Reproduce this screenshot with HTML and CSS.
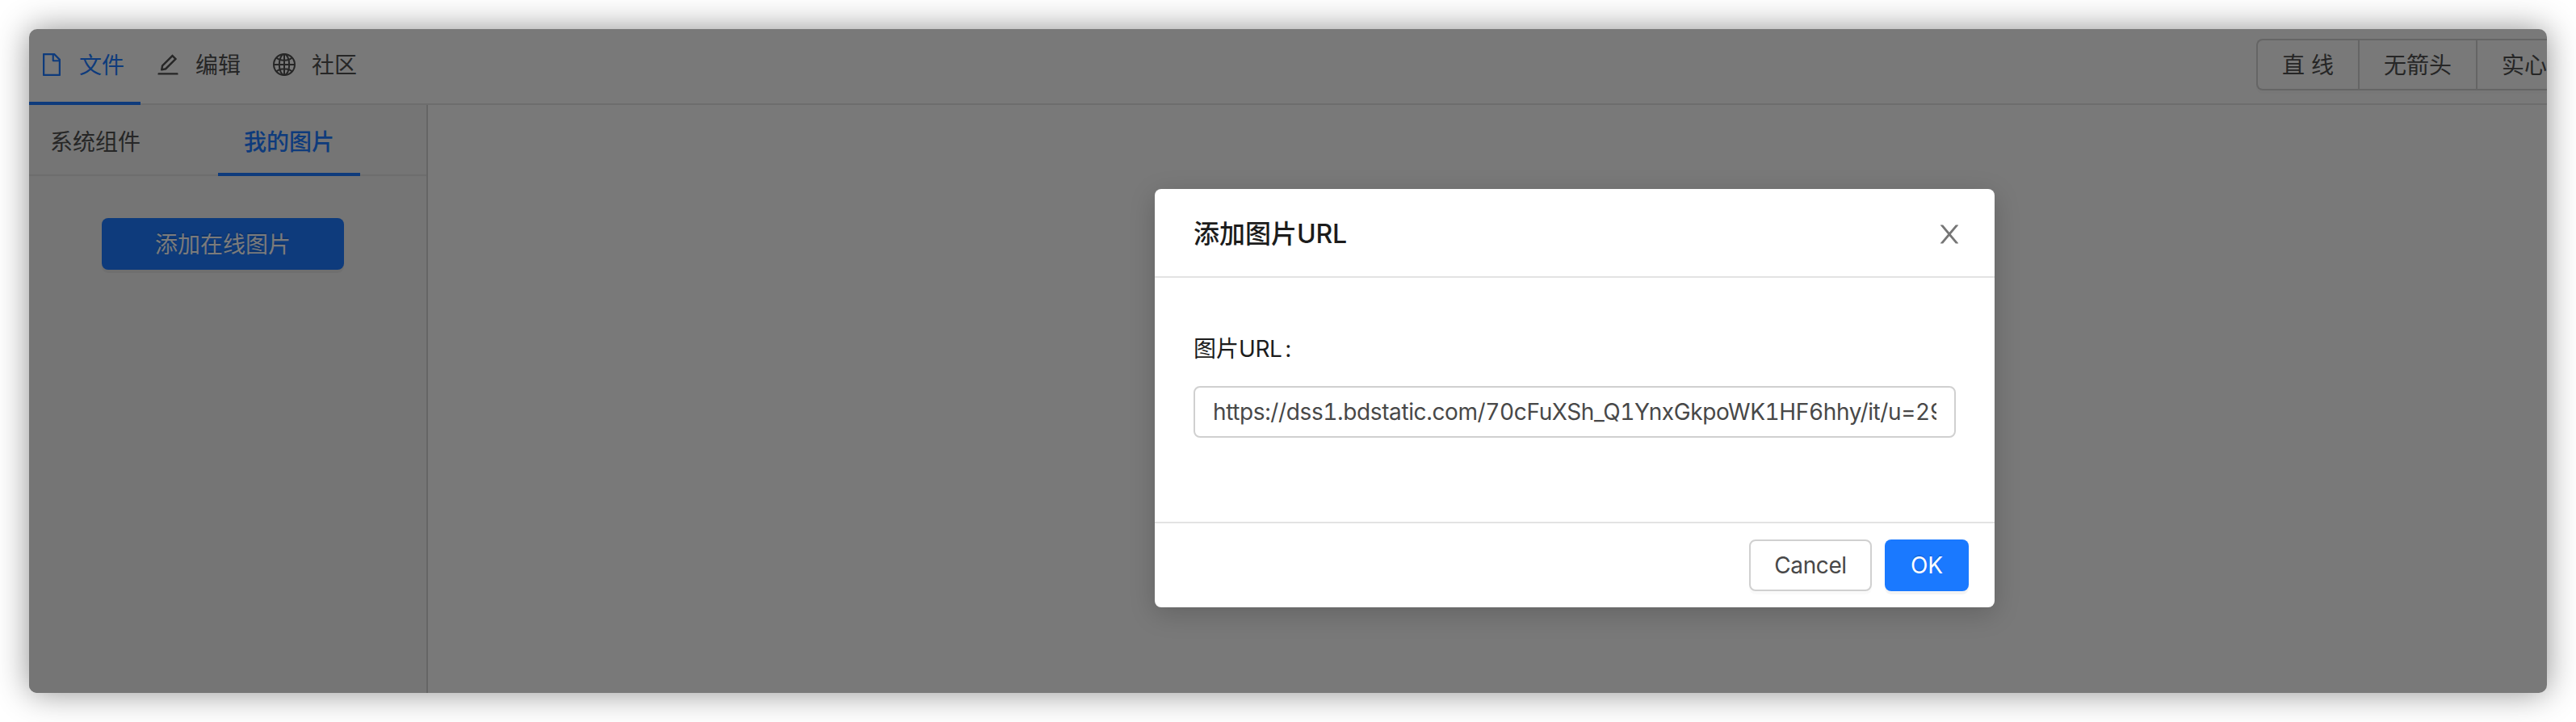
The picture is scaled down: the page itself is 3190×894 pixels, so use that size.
FILE: index.html
```html
<!DOCTYPE html>
<html lang="zh-CN">
<head>
<meta charset="utf-8">
<title>添加图片URL</title>
<link rel="stylesheet" href="styles.css">
</head>
<body>
<div class="window">
  <header class="header">
    <nav class="menu">
      <a class="menu-item active">
        <svg class="icon" viewBox="0 0 1024 1024"><path d="M854.6 288.6L639.4 73.4c-6-6-14.1-9.4-22.6-9.4H192c-17.7 0-32 14.3-32 32v832c0 17.7 14.3 32 32 32h640c17.7 0 32-14.3 32-32V311.3c0-8.500-3.400-16.700-9.400-22.700zM790.200 326H602V137.800L790.200 326zm1.800 562H232V136h302v216a42 42 0 0042 42h216v494z"/></svg>
        <span>文件</span>
      </a>
      <a class="menu-item">
        <svg class="icon" viewBox="0 0 1024 1024"><path d="M257.700 752c2 0 4-.2 6-.5L431.900 722c2-.4 3.900-1.300 5.300-2.800l423.900-423.900a9.960 9.960 0 000-14.100L694.900 114.900c-1.900-1.900-4.400-2.900-7.100-2.900s-5.200 1-7.100 2.900L256.800 538.800c-1.500 1.500-2.400 3.300-2.800 5.300l-29.500 168.200a33.500 33.500 0 009.400 29.800c6.600 6.400 14.900 9.900 23.800 9.900zm67.400-174.400L687.800 215l73.300 73.300-362.700 362.600-88.900 15.700 15.600-89zM880 836H144c-17.700 0-32 14.300-32 32v36c0 4.400 3.600 8 8 8h784c4.400 0 8-3.600 8-8v-36c0-17.700-14.300-32-32-32z"/></svg>
        <span>编辑</span>
      </a>
      <a class="menu-item">
        <svg class="icon line" viewBox="0 0 32 32"><circle cx="16" cy="16" r="13"/><ellipse cx="16" cy="16" rx="6.200" ry="13"/><path d="M16 3v26M3 16h26M6.200 7.500c5 4.200 14.600 4.200 19.600 0M6.200 24.500c5-4.200 14.600-4.200 19.600 0"/></svg>
        <span>社区</span>
      </a>
    </nav>
    <div class="tools">
      <button class="tool spaced">直<span>线</span></button>
      <button class="tool">无箭头</button>
      <button class="tool">实心</button>
    </div>
  </header>
  <div class="body">
    <aside class="sidebar">
      <div class="tabs">
        <div class="tab">系统组件</div>
        <div class="tab active">我的图片</div>
      </div>
      <button class="btn primary add">添加在线图片</button>
    </aside>
    <main class="canvas"></main>
  </div>
  <div class="mask">
    <section class="modal">
      <div class="modal-head">
        <h1 class="title">添加图片<span class="title-latin">URL</span></h1>
        <svg class="close" viewBox="0 0 1024 1024"><path d="M563.800 512l262.500-312.900c4.400-5.200.7-13.100-6.100-13.100h-79.800c-4.700 0-9.200 2.100-12.300 5.700L511.600 449.800 295.100 191.700c-3-3.600-7.500-5.700-12.300-5.700H203c-6.800 0-10.500 7.900-6.100 13.100L459.400 512 196.900 824.900A7.950 7.950 0 00203 838h79.800c4.700 0 9.200-2.100 12.300-5.700l216.500-258.100 216.500 258.100c3 3.600 7.500 5.700 12.300 5.700h79.800c6.800 0 10.500-7.900 6.100-13.100L563.800 512z"/></svg>
      </div>
      <div class="modal-body">
        <div class="label">图片<span class="label-latin">URL</span><span class="colon">:</span></div>
        <div class="input"><div class="value">https://dss1.bdstatic.com/70cFuXSh_Q1YnxGkpoWK1HF6hhy/it/u=29</div></div>
      </div>
      <div class="modal-foot">
        <button class="btn cancel">Cancel</button>
        <button class="btn primary ok">OK</button>
      </div>
    </section>
  </div>
</div>
</body>
</html>
```
FILE: styles.css
```css
* { box-sizing: border-box; }
body {
  margin: 0;
  height: 894px;
  padding: 36px;
  overflow: hidden;
  background: #fff;
  font-family: Inter, "Noto Sans CJK SC", sans-serif;
  font-size: 28px;
  font-variant-numeric: tabular-nums;
  color: #262626;
}
.window {
  position: relative;
  height: 822px;
  display: flex;
  flex-direction: column;
  border-radius: 10px;
  overflow: hidden;
  background: #797979;
  box-shadow: 0 0 40px rgba(0, 0, 0, .44);
}
.header {
  height: 94px;
  flex: none;
  display: flex;
  justify-content: space-between;
  border-bottom: 2px solid #6d6d6d;
}
.menu { display: flex; gap: 6px; }
.menu-item {
  width: 138px;
  height: 94px;
  padding: 0 0 2px 12px;
  display: flex;
  align-items: center;
  gap: 18px;
  border-bottom: 4px solid transparent;
}
.menu-item span { padding-bottom: 2px; }
.menu-item.active { color: #0e3b7c; border-color: #0e3b7c; }
.icon { width: 32px; height: 32px; fill: currentColor; flex: none; }
.icon.line { fill: none; stroke: currentColor; stroke-width: 2; }
.tools {
  width: 360px;
  flex: none;
  display: flex;
  padding-top: 12px;
  overflow: hidden;
}
.tool {
  flex: none;
  height: 64px;
  padding: 0 30px 2px;
  border: 2px solid #656565;
  border-right: 0;
  background: none;
  color: #262626;
  font: inherit;
  box-shadow: 0 4px 0 rgba(0, 0, 0, .015);
}
.tool:first-child { border-radius: 8px 0 0 8px; }
.spaced span { margin-left: 8px; }
.body { flex: 1; display: flex; }
.sidebar {
  width: 494px;
  border-right: 2px solid #656565;
  background: #757575;
}
.tabs {
  height: 88px;
  padding-left: 26px;
  display: flex;
  gap: 96px;
  border-bottom: 2px solid #6d6d6d;
}
.tab { height: 88px; line-height: 93px; }
.tab.active {
  width: 176px;
  margin-left: -32px;
  text-align: center;
  font-weight: 500;
  color: #0e3b7c;
  border-bottom: 4px solid #0e3b7c;
}
.tab:first-child { width: 144px; }
.btn {
  height: 64px;
  padding: 0;
  border: 2px solid #d0d0d0;
  border-radius: 8px;
  background: #fff;
  color: #484848;
  font: inherit;
  box-shadow: 0 4px 0 rgba(0, 0, 0, .02);
}
.btn.primary {
  border: 0;
  background: #1a79ff;
  color: #fff;
  text-shadow: 0 -2px 0 rgba(0, 0, 0, .12);
  box-shadow: 0 4px 0 rgba(0, 0, 0, .045);
}
.btn.primary.add {
  display: block;
  width: 300px;
  margin: 52px 0 0 90px;
  padding-bottom: 2px;
  background: #0e3b7c;
  color: #7b7b7b;
}
.canvas { flex: 1; }
.mask {
  position: absolute;
  inset: 0;
  padding-left: 1394px;
  padding-top: 198px;
}
.modal {
  width: 1040px;
  height: 518px;
  display: flex;
  flex-direction: column;
  border-radius: 8px;
  background: #fff;
  box-shadow: 0 8px 32px rgba(0, 0, 0, .18);
}
.modal-head {
  height: 110px;
  padding: 0 38px 0 48px;
  display: flex;
  align-items: center;
  justify-content: space-between;
  border-bottom: 2px solid #e3e3e3;
}
.title {
  margin: 0;
  padding-bottom: 2px;
  font-size: 32px;
  font-weight: 500;
  color: #1c1c1c;
}
.title-latin { letter-spacing: -.2px; }
.close { width: 36px; height: 38px; margin-top: 4px; fill: #767676; }
.modal-body { flex: 1; padding: 68px 48px 0; }
.label { height: 40px; line-height: 40px; color: #1c1c1c; }
.label-latin { letter-spacing: -.4px; }
.colon { margin-left: 4px; }
.input {
  height: 64px;
  margin-top: 26px;
  padding: 0 22px;
  border: 2px solid #d0d0d0;
  border-radius: 8px;
  color: #484848;
}
.value {
  height: 60px;
  line-height: 60px;
  overflow: hidden;
  white-space: nowrap;
  letter-spacing: -.38px;
}
.modal-foot {
  height: 106px;
  padding: 20px 32px 0;
  display: flex;
  justify-content: flex-end;
  gap: 16px;
  border-top: 2px solid #e3e3e3;
}
.cancel { width: 152px; letter-spacing: -.4px; }
.ok { width: 104px; }
```
